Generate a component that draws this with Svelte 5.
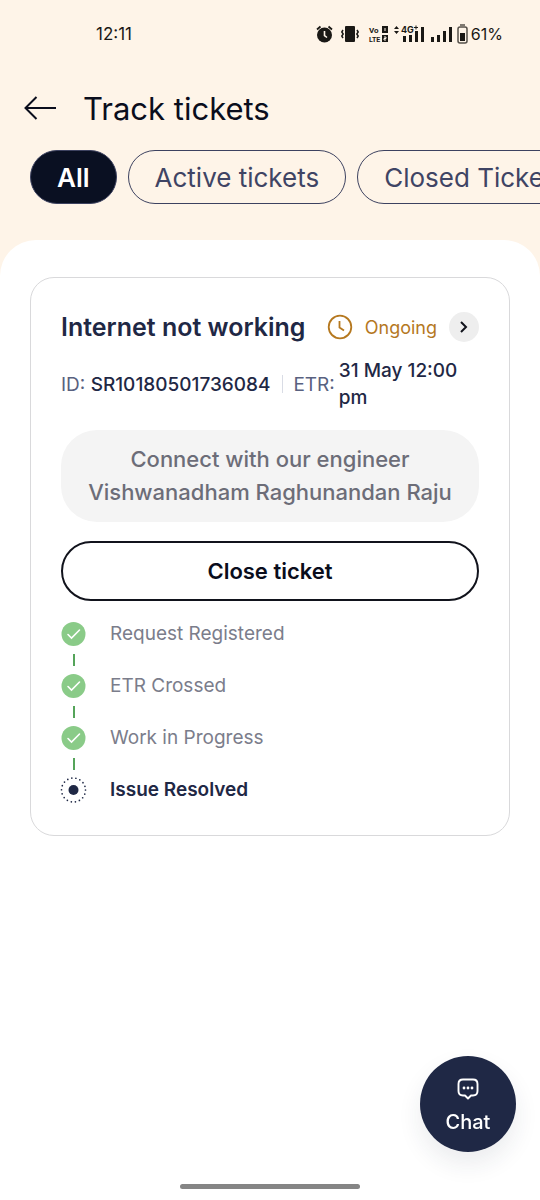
<script>
  const filters = ['All', 'Active tickets', 'Closed Tickets'];
  let selected = $state('All');
  const steps = [
    { label: 'Request Registered', done: true },
    { label: 'ETR Crossed', done: true },
    { label: 'Work in Progress', done: true },
    { label: 'Issue Resolved', done: false }
  ];
</script>

<div class="page">
  <header>
    <div class="status">
      <span>12:11</span>
      <div class="indicators">
        <svg width="17" height="18" viewBox="0 0 17 18" aria-hidden="true">
          <circle cx="8.5" cy="10" r="7.5" fill="#1a1815" />
          <path d="M1 4.5 4.5 1.5M16 4.5 12.500 1.500" stroke="#1a1815" stroke-width="1.8" />
          <path d="M8.500 6v4.500l2.500 2" stroke="#fef4e8" stroke-width="1.600" fill="none" />
        </svg>
        <svg class="vibrate" width="18" height="18" viewBox="0 0 18 18" aria-hidden="true">
          <rect x="4" y="1" width="10" height="16" rx="1" fill="#1a1815" />
          <path d="M2 5 .8 7l1.400 2L.8 11 2 13M16 5l1.200 2-1.400 2 1.400 2-1.200 2" stroke="#1a1815" stroke-width="1.500" fill="none" />
        </svg>
        <svg class="volte" width="20" height="18" viewBox="0 0 20 18" aria-hidden="true">
          <rect x="13" y="1" width="6" height="7" fill="#1a1815" />
          <rect x="13" y="10" width="6" height="7" fill="#1a1815" />
          <text x="0" y="8" font-size="8" font-weight="700" fill="#1a1815">Vo</text>
          <text x="0" y="17" font-size="7" font-weight="700" fill="#1a1815">LTE</text>
          <path d="M16 3v3M15 12h2v1.500h-2V15h2" stroke="#fef4e8" stroke-width="1" fill="none" />
        </svg>
        <svg width="31" height="18" viewBox="0 0 31 18" aria-hidden="true">
          <path d="M0 4 2.500 1 5 4zM0 6h5L2.500 9z" fill="#1a1815" />
          <path d="M9 11h3v6H9zM15 10h3v7h-3zM21 6h3v11h-3zM27 2h3v15h-3z" fill="#1a1815" />
          <text x="7" y="8" font-size="9" font-weight="700" fill="#1a1815">4G</text>
          <path d="M20 2.500h4M22 .5v4" stroke="#1a1815" stroke-width="1" />
        </svg>
        <svg class="signal" width="22" height="18" viewBox="0 0 22 18" aria-hidden="true">
          <path d="M0 12h3v5H0zM6 10h3v7H6zM12 6h3v11h-3zM18 2h3v15h-3z" fill="#1a1815" />
        </svg>
        <svg width="11" height="20" viewBox="0 0 11 20" aria-hidden="true">
          <rect x="1" y="3" width="9" height="16" rx="2" fill="none" stroke="#55504a" stroke-width="1.500" />
          <path d="M3 1h5" stroke="#55504a" stroke-width="1.500" />
          <path d="M3 9h5v8H3z" fill="#1a1815" />
        </svg>
        <span class="percent">61%</span>
      </div>
    </div>
    <div class="heading">
      <button class="back" aria-label="Back">
        <svg width="34" height="26" viewBox="0 0 34 26" fill="none" stroke="#0a0d1c" stroke-width="2" aria-hidden="true">
          <path d="M32 13H1.500M12.500 2 1.500 13l11 11" />
        </svg>
      </button>
      <h1>Track tickets</h1>
    </div>
    <nav class="filters" aria-label="Ticket filter">
      {#each filters as filter}
        <button class:active={selected === filter} aria-pressed={selected === filter} onclick={() => (selected = filter)}>{filter}</button>
      {/each}
    </nav>
  </header>

  <main>
    <article>
      <div class="title">
        <h2>Internet not working</h2>
        <span class="state">
          <svg width="26" height="26" viewBox="0 0 26 26" fill="none" stroke="#b5781f" stroke-width="1.800" aria-hidden="true">
            <circle cx="13" cy="13" r="11.300" />
            <path d="M12.500 7v6.500l4.500 3" />
          </svg>
          Ongoing
        </span>
        <button class="open" aria-label="Open ticket">
          <svg width="10" height="14" viewBox="0 0 10 14" fill="none" stroke="#11131c" stroke-width="2" aria-hidden="true">
            <path d="m2 2 5 5-5 5" />
          </svg>
        </button>
      </div>
      <div class="meta">
        <span>ID: <strong>SR10180501736084</strong></span>
        <span class="rule"></span>
        <span>ETR:</span>
        <strong class="time">31 May 12:00 pm</strong>
      </div>
      <button class="engineer">Connect with our engineer Vishwanadham Raghunandan Raju</button>
      <button class="close">Close ticket</button>
      <ol>
        {#each steps as step}
          <li class:current={!step.done}>
            <svg width="26" height="26" viewBox="0 0 26 26" fill="none" aria-hidden="true">
              {#if step.done}
                <circle cx="12.500" cy="13" r="12" fill="#8acb88" />
                <path d="m7 13.500 3.500 3.500 8-8" stroke="#fff" stroke-width="1.600" stroke-linecap="round" />
              {:else}
                <circle cx="12.500" cy="13" r="12" stroke="#1f2845" stroke-width="1.700" stroke-linecap="round" stroke-dasharray="0 4.189" />
                <circle cx="12.500" cy="13" r="5" fill="#1f2845" />
              {/if}
            </svg>
            <span>{step.label}</span>
          </li>
        {/each}
      </ol>
    </article>
  </main>

  <button class="chat">
    <svg width="22" height="22" viewBox="0 0 22 22" fill="none" aria-hidden="true">
      <path d="M6 1.500h10q4.500 0 4.500 4.500v7q0 4.500-4.500 4.500h-2L11 20.500 8 17.500H6Q1.500 17.500 1.500 13V6Q1.500 1.500 6 1.500Z" stroke="#fff" stroke-width="1.900" stroke-linejoin="round" />
      <path d="M7 10h.01M11 10h.01M15 10h.01" stroke="#fff" stroke-width="2.800" stroke-linecap="round" />
    </svg>
    Chat
  </button>
  <div class="handle"></div>
</div>

<style>
  :global(body) {
    margin: 0;
    background: #fff;
  }
  .page {
    min-height: 100vh;
    display: flex;
    flex-direction: column;
    background: #fef4e8;
    font-family: Inter, "Liberation Sans", sans-serif;
    color: #1f2845;
    overflow: hidden;
  }
  button {
    font: inherit;
    color: inherit;
    background: none;
    border: 0;
    padding: 0;
    cursor: pointer;
  }
  .status {
    height: 68px;
    padding: 0 37px 0 96px;
    display: flex;
    align-items: center;
    justify-content: space-between;
    font-size: 17px;
    color: #1a1815;
  }
  .indicators {
    display: flex;
    align-items: center;
  }
  .indicators svg {
    overflow: visible;
  }
  .vibrate {
    margin: 0 10px 0 8px;
  }
  .volte {
    margin-right: 5px;
    font-family: Roboto, sans-serif;
  }
  .signal {
    margin: 0 4px 0 6px;
  }
  .percent {
    margin-left: 3px;
    font-size: 16px;
  }
  .heading {
    display: flex;
    align-items: center;
    gap: 25px;
    height: 80px;
    padding: 0 24px;
  }
  .back,
  .back svg {
    display: block;
  }
  h1 {
    margin: 0;
    font-size: 31px;
    font-weight: 400;
    color: #0a0d1c;
  }
  .filters {
    display: flex;
    gap: 11px;
    padding: 2px 30px 36px;
    overflow: hidden;
  }
  .filters button {
    flex: none;
    height: 54px;
    padding: 0 26px;
    border: 1px solid #3d4260;
    border-radius: 27px;
    font-size: 26px;
    color: #3f4464;
  }
  .filters .active {
    background: #0a1022;
    color: #fff;
    font-weight: 600;
  }
  main {
    flex: 1;
    background: #fff;
    border-radius: 36px 36px 0 0;
    padding: 37px 30px 0;
  }
  article {
    border: 1px solid #d9d9db;
    border-radius: 24px;
    padding: 34px 30px 32px;
  }
  .title {
    display: flex;
    align-items: center;
  }
  h2 {
    flex: 1;
    margin: 0;
    font-size: 25px;
    font-weight: 600;
    line-height: 30px;
    white-space: nowrap;
  }
  .state {
    display: flex;
    align-items: center;
    gap: 12px;
    font-size: 18px;
    color: #b5781f;
    margin-right: 12px;
  }
  .open {
    width: 30px;
    height: 30px;
    border-radius: 50%;
    background: #eee;
    display: grid;
    place-items: center;
  }
  .meta {
    display: flex;
    align-items: center;
    margin: 15px 0 19px;
    font-size: 19px;
    line-height: 27px;
    color: #596180;
    white-space: nowrap;
  }
  .meta strong {
    color: #1f2845;
    font-weight: 500;
  }
  .rule {
    width: 1px;
    height: 18px;
    background: #d9dce5;
    margin: 0 11px;
  }
  .meta .time {
    margin-left: 4px;
    white-space: normal;
  }
  .engineer {
    display: block;
    width: 100%;
    padding: 13px 24px;
    border-radius: 36px;
    background: #f4f4f4;
    color: #6c6d78;
    font-size: 22px;
    line-height: 33px;
    font-weight: 500;
  }
  .close {
    display: block;
    width: 100%;
    height: 60px;
    margin: 19px 0 20px;
    border: 2px solid #11131c;
    border-radius: 30px;
    font-size: 22px;
    font-weight: 600;
    color: #0a0d1c;
  }
  ol {
    list-style: none;
    margin: 0;
    padding: 0;
    display: grid;
    gap: 26px;
  }
  li {
    position: relative;
    display: flex;
    align-items: center;
    gap: 23px;
    font-size: 19px;
    line-height: 26px;
    color: #7b7d8b;
  }
  li svg {
    overflow: visible;
  }
  li:not(:last-child)::after {
    content: "";
    position: absolute;
    left: 12px;
    top: 33px;
    width: 2px;
    height: 12px;
    background: #55a45a;
  }
  .current {
    color: #1f2845;
    font-weight: 600;
  }
  .chat {
    position: fixed;
    right: 24px;
    bottom: 48px;
    width: 96px;
    height: 96px;
    border-radius: 50%;
    background: #1f2845;
    color: #fff;
    font-size: 20px;
    font-weight: 500;
    display: flex;
    flex-direction: column;
    align-items: center;
    justify-content: center;
    gap: 10px;
    padding-top: 3px;
    box-shadow: 0 12px 24px rgb(31 40 69 / 9%);
  }
  .handle {
    position: fixed;
    bottom: 11px;
    left: 33.333%;
    right: 33.333%;
    height: 5px;
    border-radius: 3px;
    background: #858585;
  }
</style>
